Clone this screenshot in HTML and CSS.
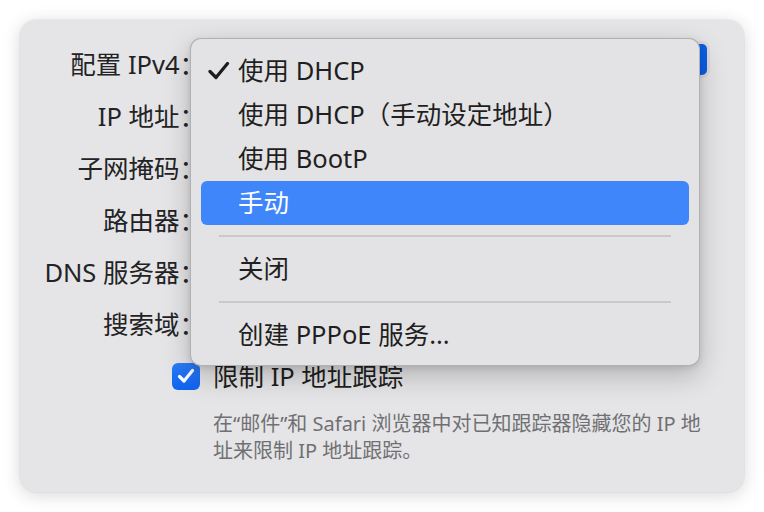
FILE: index.html
```html
<!DOCTYPE html>
<html lang="zh-CN">
<head>
<meta charset="utf-8">
<title>配置 IPv4</title>
<link rel="stylesheet" href="styles.css">
</head>
<body>
<div class="page">
  <div class="panel">
    <div class="form">
      <div class="label">配置 IPv4：</div>
      <div class="control"><div class="popup"></div></div>
      <div class="label">IP 地址：</div>
      <div class="control"></div>
      <div class="label">子网掩码：</div>
      <div class="control"></div>
      <div class="label">路由器：</div>
      <div class="control"></div>
      <div class="label">DNS 服务器：</div>
      <div class="control"></div>
      <div class="label">搜索域：</div>
      <div class="control"></div>
    </div>
    <div class="check-row">
      <span class="checkbox">
        <svg width="18" height="16" viewBox="0 0 18 16"><path d="M2.5 8.5 L7 13 L15.5 2.5" fill="none" stroke="#fff" stroke-width="3.2" stroke-linecap="round" stroke-linejoin="round"/></svg>
      </span>
      <span class="check-label">限制 IP 地址跟踪</span>
    </div>
    <p class="desc">在“邮件”和 Safari 浏览器中对已知跟踪器隐藏您的 IP 地<br>址来限制 IP 地址跟踪。</p>

    <div class="menu">
      <div class="item">
        <svg class="tick" width="22" height="18" viewBox="0 0 22 18"><path d="M2 9.5 L8 15.5 L19.5 1.5" fill="none" stroke="#1d1d1f" stroke-width="3.2" stroke-linecap="round" stroke-linejoin="round"/></svg>
        使用 DHCP
      </div>
      <div class="item">使用 DHCP（手动设定地址）</div>
      <div class="item">使用 BootP</div>
      <div class="item selected">手动</div>
      <div class="sep"></div>
      <div class="item">关闭</div>
      <div class="sep"></div>
      <div class="item">创建 PPPoE 服务...</div>
    </div>
  </div>
</div>
</body>
</html>
```

FILE: styles.css
```css
html, body {
  margin: 0;
  padding: 0;
  background: #ffffff;
}

body {
  font-family: "Noto Sans", "Noto Sans CJK SC", sans-serif;
  color: #1f1f21;
}

.page {
  padding: 20px;
}

.panel {
  position: relative;
  width: 724px;
  height: 472px;
  box-sizing: border-box;
  border-radius: 16px;
  background: #e5e5e7;
  box-shadow: 0 3px 18px rgba(0, 0, 0, 0.16), 0 0 0 1px rgba(0, 0, 0, 0.04);
}

.form {
  display: grid;
  grid-template-columns: 185px 1fr;
  grid-auto-rows: 52px;
  padding-top: 16px;
  padding-right: 34px;
}

.label {
  display: flex;
  align-items: center;
  justify-content: flex-end;
  font-size: 25.5px;
  color: #232325;
  white-space: nowrap;
}

.control {
  display: flex;
  align-items: center;
  padding-left: 7px;
}

.popup {
  width: 100%;
  height: 37px;
  box-sizing: border-box;
  border-radius: 8px;
  background: #0b5fe6;
  border: 3px solid #dadadd;
  margin-top: -6px;
}

.check-row {
  display: flex;
  align-items: center;
  gap: 13px;
  margin-top: 14px;
  padding-left: 152px;
  height: 28px;
}

.checkbox {
  width: 28px;
  height: 27px;
  border-radius: 6px;
  background: linear-gradient(#2b7cf9, #0f63f0);
  display: flex;
  align-items: center;
  justify-content: center;
}

.check-label {
  font-size: 25.5px;
  color: #1f1f21;
  line-height: 28px;
}

.desc {
  margin: 20px 0 0 193px;
  font-size: 20px;
  line-height: 27px;
  color: #707073;
}

.menu {
  position: absolute;
  left: 170px;
  top: 18px;
  width: 510px;
  height: 328px;
  box-sizing: border-box;
  padding: 10px;
  border-radius: 11px;
  background: #e3e3e5;
  border: 1px solid rgba(0, 0, 0, 0.22);
  box-shadow: 0 10px 28px rgba(0, 0, 0, 0.22), 0 2px 6px rgba(0, 0, 0, 0.1);
}

.item {
  position: relative;
  height: 44px;
  box-sizing: border-box;
  padding-bottom: 6px;
  display: flex;
  align-items: center;
  padding-left: 37px;
  border-radius: 6px;
  font-size: 25.5px;
  color: #1f1f21;
  white-space: nowrap;
}

.item.selected {
  background: #3f86fb;
  color: #ffffff;
}

.tick {
  position: absolute;
  left: 7px;
  top: 13px;
}

.sep {
  height: 2px;
  margin: 10px 18px;
  background: #c9c9cb;
}
```
